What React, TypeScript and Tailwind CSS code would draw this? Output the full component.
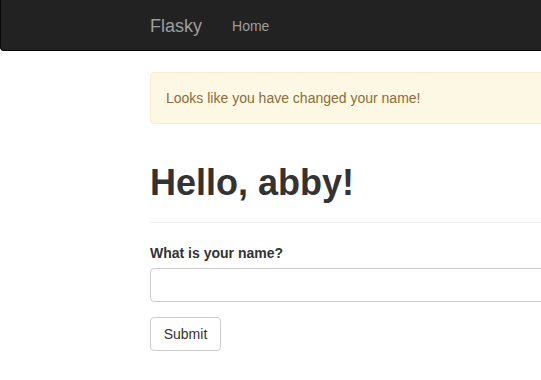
export default function App() {
  return (
    <div
      className="w-[541px] h-[380px] overflow-hidden bg-white text-[#333] text-[14px] leading-[20px]"
      style={{ fontFamily: '"Liberation Sans", Arial, sans-serif' }}
    >
      <div className="h-[51px] w-[620px] bg-[#222] border-x border-b border-[#080808] rounded-b-[4px] flex items-center pt-[2px]">
        <div className="ml-[149px] text-[18px] text-[#9d9d9d] leading-[20px]">Flasky</div>
        <div className="ml-[30px] text-[14px] text-[#9d9d9d]">Home</div>
      </div>
      <div className="ml-[150px] w-[620px]">
        <div className="mt-[21px] h-[52px] rounded-[4px] border border-[#faebcc] bg-[#fcf8e3] text-[#8a6d3b] px-[15px] flex items-center">
          Looks like you have changed your name!
        </div>
        <div className="mt-[39px] border-b border-[#eee] pb-[9px]">
          <h1 className="text-[36px] leading-[40px] font-bold mb-[10px]">Hello, abby!</h1>
        </div>
        <div className="mt-[20px]">
          <div className="font-bold mb-[5px]">What is your name?</div>
          <div className="h-[34px] rounded-[4px] border border-[#ccc] bg-white" />
          <button className="mt-[15px] h-[34px] w-[71px] rounded-[4px] border border-[#ccc] bg-white text-[#333] text-[14px]">
            Submit
          </button>
        </div>
      </div>
    </div>
  );
}
